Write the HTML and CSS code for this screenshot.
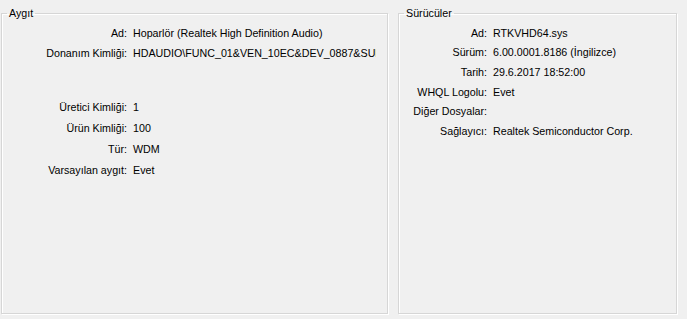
FILE: index.html
```html
<!DOCTYPE html>
<html lang="tr">
<head>
    <meta charset="UTF-8">
    <title>Özellikler</title>
    <link rel="stylesheet" href="styles.css">
</head>
<body>
    <div class="panes">
        <fieldset class="group group-device">
            <legend>Aygıt</legend>
            <div class="props">
                <span class="key">Ad:</span><span class="val">Hoparlör (Realtek High Definition Audio)</span>
                <span class="key">Donanım Kimliği:</span><span class="val clip">HDAUDIO\FUNC_01&amp;VEN_10EC&amp;DEV_0887&amp;SUBSYS_1043841B</span>
                <div class="spacer"></div>
                <span class="key">Üretici Kimliği:</span><span class="val">1</span>
                <span class="key">Ürün Kimliği:</span><span class="val">100</span>
                <span class="key">Tür:</span><span class="val">WDM</span>
                <span class="key">Varsayılan aygıt:</span><span class="val">Evet</span>
            </div>
        </fieldset>

        <fieldset class="group group-driver">
            <legend>Sürücüler</legend>
            <div class="props">
                <span class="key">Ad:</span><span class="val">RTKVHD64.sys</span>
                <span class="key">Sürüm:</span><span class="val">6.00.0001.8186 (İngilizce)</span>
                <span class="key">Tarih:</span><span class="val">29.6.2017 18:52:00</span>
                <span class="key">WHQL Logolu:</span><span class="val">Evet</span>
                <span class="key">Diğer Dosyalar:</span><span class="val"></span>
                <span class="key">Sağlayıcı:</span><span class="val">Realtek Semiconductor Corp.</span>
            </div>
        </fieldset>
    </div>
</body>
</html>
```

FILE: styles.css
```css
html, body {
    margin: 0;
    background: #f0f0f0;
}
body {
    font-family: "Liberation Sans", Arial, sans-serif;
    font-size: 10.7px;
    color: #000;
    width: 687px;
    height: 319px;
    overflow: hidden;
}
.panes {
    display: flex;
    gap: 10px;
    padding: 6px 0 0 1px;
}
.group {
    margin: 0;
    padding: 3px 0 0 0;
    border: 1px solid #d6d6d6;
    box-shadow: inset 1px 1px 0 #fff, 1px 1px 0 #fff;
    height: 308px;
    box-sizing: border-box;
    min-width: 0;
}
.group legend {
    padding: 0 2px;
    margin-left: 5px;
    line-height: 14px;
}
.group-device {
    width: 387px;
}
.group-driver {
    width: 279px;
}
.props {
    display: grid;
    column-gap: 6px;
    align-items: center;
    padding-left: 5px;
}
.group-device .props {
    grid-template-columns: 120px 243px;
    grid-template-rows: 20px 20px 33px repeat(4, 21px);
}
.group-driver .props {
    grid-template-columns: 83px 1fr;
    grid-auto-rows: 19.6px;
}
.spacer {
    grid-column: 1 / -1;
}
.key {
    text-align: right;
    white-space: nowrap;
}
.val {
    white-space: nowrap;
}
.clip {
    overflow: hidden;
}
```
